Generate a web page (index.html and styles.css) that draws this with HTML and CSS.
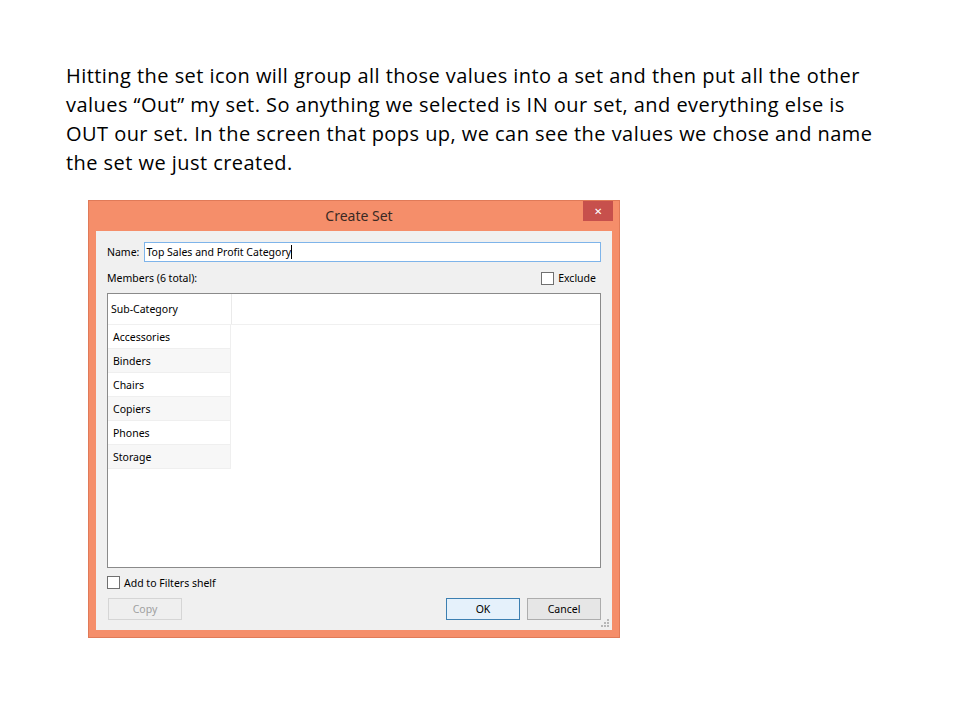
FILE: index.html
```html
<!DOCTYPE html>
<html lang="en">
<head>
    <meta charset="UTF-8">
    <title>Create Set</title>
    <link rel="stylesheet" href="styles.css">
</head>
<body>
    <p class="note">Hitting the set icon will group all those values into a set and then put all the other<br>values &ldquo;Out&rdquo; my set. So anything we selected is IN our set, and everything else is<br>OUT our set. In the screen that pops up, we can see the values we chose and name<br>the set we just created.</p>

    <div class="dialog">
        <div class="title-bar">
            <span class="title">Create Set</span>
            <span class="close">&#x2715;</span>
        </div>
        <div class="body">
            <div class="name-row">
                <label>Name:</label>
                <div class="name-input">Top Sales and Profit Category<span class="caret"></span></div>
            </div>
            <div class="members-row">
                <span>Members (6 total):</span>
                <span class="check-label"><span class="box"></span>Exclude</span>
            </div>
            <div class="list">
                <div class="list-head">
                    <div class="col">Sub-Category</div>
                </div>
                <div class="row">Accessories</div>
                <div class="row alt">Binders</div>
                <div class="row">Chairs</div>
                <div class="row alt">Copiers</div>
                <div class="row">Phones</div>
                <div class="row alt">Storage</div>
            </div>
            <div class="filters-row">
                <span class="check-label"><span class="box"></span>Add to Filters shelf</span>
            </div>
            <div class="buttons">
                <button class="disabled">Copy</button>
                <div class="right">
                    <button class="default">OK</button>
                    <button>Cancel</button>
                </div>
            </div>
            <svg class="grip" width="9" height="9" viewBox="0 0 9 9">
                <rect x="6" y="0" width="2" height="2" fill="#b8b8b8"/>
                <rect x="3" y="3" width="2" height="2" fill="#b8b8b8"/>
                <rect x="6" y="3" width="2" height="2" fill="#b8b8b8"/>
                <rect x="0" y="6" width="2" height="2" fill="#b8b8b8"/>
                <rect x="3" y="6" width="2" height="2" fill="#b8b8b8"/>
                <rect x="6" y="6" width="2" height="2" fill="#b8b8b8"/>
            </svg>
        </div>
    </div>
</body>
</html>
```

FILE: styles.css
```css
body {
    margin: 0;
    background: #fff;
    color: #000;
    font-family: "Open Sans", Arial, sans-serif;
}

.note {
    margin: 0;
    padding: 61px 0 0 66px;
    font-size: 20px;
    line-height: 29px;
    letter-spacing: 0.45px;
    white-space: nowrap;
}

.dialog {
    margin: 23px 0 0 88px;
    width: 532px;
    height: 438px;
    box-sizing: border-box;
    background: #f58e6a;
    border: 1px solid #e07a58;
    padding: 0 7px 7px 7px;
    display: flex;
    flex-direction: column;
    font-family: "Noto Sans", Arial, sans-serif;
    font-size: 10.5px;
}

.title-bar {
    position: relative;
    height: 30px;
    display: flex;
    align-items: center;
    justify-content: center;
}

.title {
    font-size: 14px;
    color: #3a2a24;
    margin: 0 0 2px 10px;
}

.close {
    position: absolute;
    right: -1px;
    top: 0;
    width: 30px;
    height: 20px;
    background: #c7504c;
    color: #fff;
    font-size: 10px;
    display: flex;
    align-items: center;
    justify-content: center;
}

.body {
    position: relative;
    flex: 1;
    background: #f0f0f0;
    padding: 11px 11px 0 11px;
    display: flex;
    flex-direction: column;
}

.name-row {
    display: flex;
    align-items: center;
    gap: 5px;
}

.name-input {
    flex: 1;
    height: 20px;
    box-sizing: border-box;
    border: 1px solid #7eb4ea;
    background: #fff;
    padding: 0 1px;
    display: flex;
    align-items: center;
    color: #000;
}

.caret {
    display: inline-block;
    width: 1px;
    height: 14px;
    background: #000;
}

.members-row {
    display: flex;
    justify-content: space-between;
    align-items: center;
    margin-top: 7px;
    padding-right: 5px;
    height: 18px;
}

.check-label {
    display: flex;
    align-items: center;
    gap: 4px;
}

.box {
    width: 13px;
    height: 13px;
    box-sizing: border-box;
    border: 1px solid #707070;
    background: #fff;
}

.list {
    margin-top: 6px;
    height: 275px;
    box-sizing: border-box;
    border: 1px solid #8a8a8a;
    background: #fff;
}

.list-head {
    height: 30px;
    border-bottom: 1px solid #f0f0f0;
    display: flex;
}

.col {
    width: 120px;
    padding-left: 3px;
    border-right: 1px solid #eaeaea;
    display: flex;
    align-items: center;
}

.row {
    width: 123px;
    height: 24px;
    box-sizing: border-box;
    padding-left: 5px;
    border-bottom: 1px solid #efefef;
    border-right: 1px solid #efefef;
    display: flex;
    align-items: center;
}

.row.alt {
    background: #f7f7f7;
}

.filters-row {
    margin-top: 7px;
    height: 15px;
    display: flex;
    align-items: center;
}

.buttons {
    margin-top: 8px;
    display: flex;
    justify-content: space-between;
    padding-left: 1px;
}

.right {
    display: flex;
    gap: 7px;
}

button {
    width: 74px;
    height: 22px;
    font-family: "Noto Sans", Arial, sans-serif;
    font-size: 10.5px;
    background: #e6e6e6;
    border: 1px solid #adadad;
    color: #000;
    padding: 0;
}

button.default {
    border-color: #3c7fb1;
    background: #e5f1fb;
}

button.disabled {
    color: #a0a0a0;
    border-color: #d5d5d5;
    background: #efefef;
}

.grip {
    position: absolute;
    right: 2px;
    bottom: 2px;
}
```
